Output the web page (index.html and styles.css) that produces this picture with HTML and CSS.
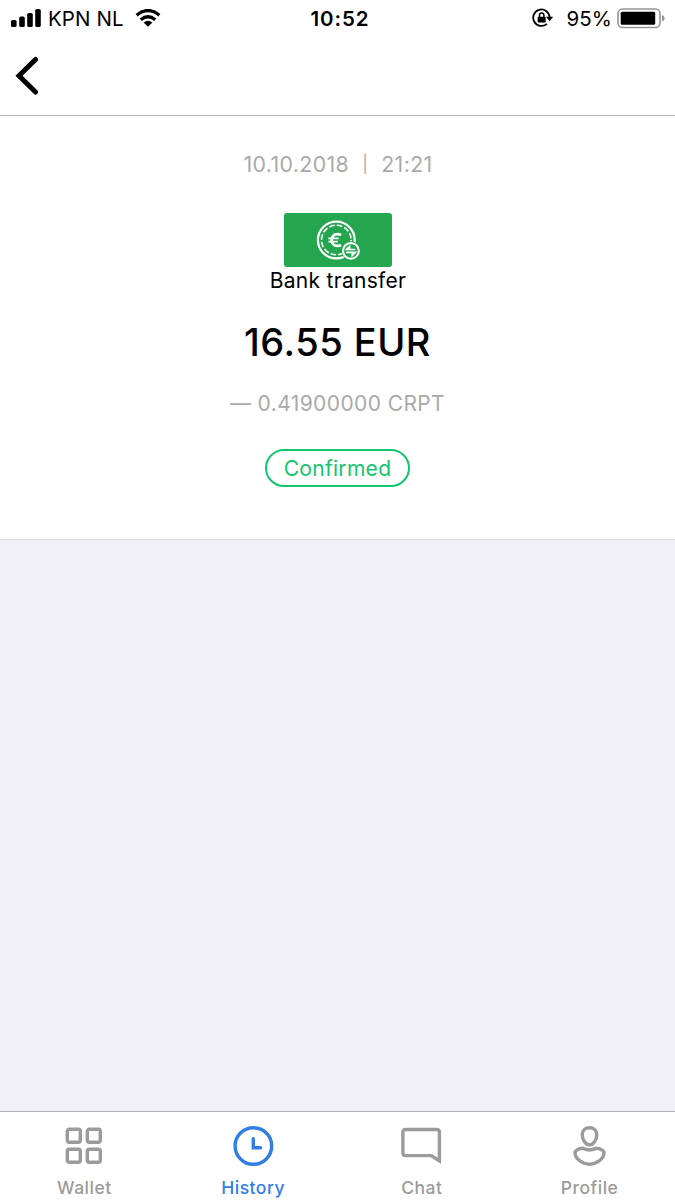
FILE: index.html
```html
<!DOCTYPE html>
<html lang="en">
<head>
<meta charset="utf-8">
<title>Transaction</title>
<link rel="stylesheet" href="styles.css">
</head>
<body>
<div class="screen">
  <header class="top">
    <div class="status">
      <div class="status-left">
        <svg class="signal" width="31" height="19" viewBox="0 0 31 19"><rect x="0" y="11" width="5.6" height="7" rx="1.6"/><rect x="8.2" y="7.5" width="5.6" height="10.5" rx="1.6"/><rect x="16.2" y="4" width="5.6" height="14" rx="1.6"/><rect x="24.2" y="0" width="5.6" height="18" rx="1.6"/></svg>
        <span class="carrier">KPN NL</span>
        <svg class="wifi" width="26" height="18" viewBox="0 0 26 18"><path d="M1.6 6.2Q13-3 24.4 6.2M5.8 10.7Q13 4.9 20.2 10.7" fill="none" stroke="#000" stroke-width="3.4"/><path d="M8.6 13.4Q13 10.2 17.4 13.4L13 17.8Z"/></svg>
      </div>
      <div class="time">10:52</div>
      <div class="status-right">
        <svg class="lock" width="22" height="20" viewBox="0 0 22 20"><path d="M14.9 15.8A8.2 8.2 0 1 1 17.6 9" fill="none" stroke="#000" stroke-width="1.8"/><path d="M14 8.7H21.2L17.6 13.2Z"/><rect x="5.7" y="8.7" width="8" height="5.8" rx=".8"/><path d="M7.5 9V7.2a2.2 2.2 0 0 1 4.4 0V9" fill="none" stroke="#000" stroke-width="1.5"/></svg>
        <span class="percent">95%</span>
        <svg class="battery" width="48" height="21" viewBox="0 0 48 21"><rect x="1" y="1" width="42" height="18.5" rx="4.5" fill="none" stroke="#959595" stroke-width="1.6"/><rect x="3.7" y="3.8" width="34.5" height="13" rx="1.5"/><path d="M45 7Q47.6 8 47.6 10.3T45 13.6Z" fill="#959595"/></svg>
      </div>
    </div>
    <svg class="back" width="24" height="40" viewBox="0 0 24 40"><path d="M20.5 3.5L4 19.7L20.5 36" fill="none" stroke="#000" stroke-width="5" stroke-linecap="round"/></svg>
  </header>
  <main class="details">
    <p class="date"><span>10.10.2018</span><span class="bar">|</span><span>21:21</span></p>
    <div class="method">
      <svg width="46" height="42" viewBox="0 0 46 42" fill="none" stroke="#fff"><circle cx="20.3" cy="20" r="18.4" stroke-width="2.2"/><circle cx="20.3" cy="20" r="14.8" stroke-width="1.6" stroke-dasharray="5.6 2.15"/><path d="M25 15.2Q23.4 14.1 21.4 14.1C17.6 14.1 15.7 16.8 15.7 20S17.6 25.9 21.4 25.9Q23.4 25.9 25 24.8" stroke-width="2.7"/><path d="M12.4 18.3H22.6M12.4 21.7H21.8" stroke-width="1.7"/><circle cx="34.9" cy="30.8" r="9.5" fill="#23a64e" stroke="none"/><circle cx="34.9" cy="30.8" r="7.9" stroke-width="2"/><path d="M39.4 29.5H30.4L33.6 26.4V29.5M30.2 32.4H39.4L36.2 35.5V32.4" stroke-width="1.6"/></svg>
    </div>
    <p class="method-name">Bank transfer</p>
    <h1 class="amount">16.55 EUR</h1>
    <p class="crypto">— 0.41900000 CRPT</p>
    <span class="badge">Confirmed</span>
  </main>
  <nav class="tabs">
    <div class="tab">
      <svg width="42" height="42" viewBox="0 0 42 42"><rect x="4.3" y="4.3" width="13" height="13" rx="2"/><rect x="24.3" y="4.3" width="13" height="13" rx="2"/><rect x="4.3" y="24.3" width="13" height="13" rx="2"/><rect x="24.3" y="24.3" width="13" height="13" rx="2"/></svg>
      <span>Wallet</span>
    </div>
    <div class="tab active">
      <svg width="42" height="42" viewBox="0 0 42 42"><circle cx="21.4" cy="21" r="18.3"/><path d="M21.3 13.8V22.7H28.5" stroke-linecap="round"/></svg>
      <span>History</span>
    </div>
    <div class="tab">
      <svg width="42" height="42" viewBox="0 0 42 42"><path d="M38.4 35.8V7.3Q38.4 4.5 35.6 4.5H4.7Q1.9 4.5 1.9 7.3V27.8Q1.9 30.6 4.7 30.6H30.2Z"/></svg>
      <span>Chat</span>
    </div>
    <div class="tab">
      <svg width="42" height="42" viewBox="0 0 42 42"><path d="M19.5 2.7C15.2 2.7 12.2 5.6 12.2 9.8C12.2 15 15.8 20 19.5 20S26.8 15 26.8 9.8C26.8 5.6 23.8 2.7 19.5 2.7Z"/><path d="M13 23.3C9 23.5 5 25.3 5 27.7C5 33.3 12 39.2 19.5 39.2S34 33.3 34 27.7C34 25.3 30 23.5 26 23.3Q19.5 26.7 13 23.3Z"/></svg>
      <span class="profile-label">Profile</span>
    </div>
  </nav>
</div>
</body>
</html>
```
FILE: styles.css
```css
* { box-sizing: border-box; }
body { margin: 0; font-family: Inter, "Liberation Sans", sans-serif; color: #000; }
p, h1 { margin: 0; white-space: nowrap; }
svg { display: block; flex: none; }
.screen { height: 1200px; display: flex; flex-direction: column; background: #efeff5; overflow: hidden; }
.top { height: 116px; background: #fff; border-bottom: 1px solid #b5b5b5; }
.status { height: 36px; display: grid; grid-template-columns: 1fr auto 1fr; align-items: center; padding: 0 10px 0 11px; font-size: 20.5px; }
.status-left, .status-right { display: flex; align-items: center; }
.status-right { justify-content: flex-end; }
.carrier { margin-left: 6px; letter-spacing: .1px; }
.wifi { margin-left: 11px; }
.time { font-weight: 600; letter-spacing: .9px; padding-left: 4px; }
.percent { margin: 0 5px 0 12px; letter-spacing: .1px; }
.back { margin: 20px 0 0 15px; }
.details { height: 424px; display: flex; flex-direction: column; align-items: center; background: #fff; border-bottom: 1px solid #dcdce0; padding-top: 35px; }
.date { display: flex; padding-left: 1px; font-size: 21.3px; line-height: 26px; letter-spacing: .4px; color: #aaa; }
.bar { width: 32px; text-align: center; font-size: 17px; }
.method { width: 108px; height: 54px; margin-top: 36px; border-radius: 3px; background: #23a64e; padding: 7px 0 0 32px; }
.method-name { margin-top: 1px; font-size: 21px; line-height: 26px; letter-spacing: .3px; padding-left: 1px; }
.amount { margin-top: 25px; font-size: 38px; line-height: 46px; font-weight: 500; letter-spacing: .5px; }
.crypto { margin-top: 26px; font-size: 21px; line-height: 26px; letter-spacing: .4px; color: #aaa; }
.badge { margin-top: 32px; width: 145px; height: 38px; border: 2px solid #13c56f; border-radius: 19px; color: #13c56f; font-size: 21px; line-height: 36px; letter-spacing: .3px; text-align: center; }
.tabs { margin-top: auto; height: 89px; display: grid; grid-template-columns: repeat(4, 1fr); background: #fff; border-top: 1px solid #b0b0b5; padding-top: 13px; }
.tab { display: flex; flex-direction: column; align-items: center; color: #9b9b9b; font-size: 17.5px; line-height: 22px; font-weight: 500; letter-spacing: .5px; }
.tab svg { margin-bottom: 10px; fill: none; stroke: currentColor; stroke-width: 3.4; }
.active { color: #327ee5; }
.profile-label { padding-right: 2px; }
```
